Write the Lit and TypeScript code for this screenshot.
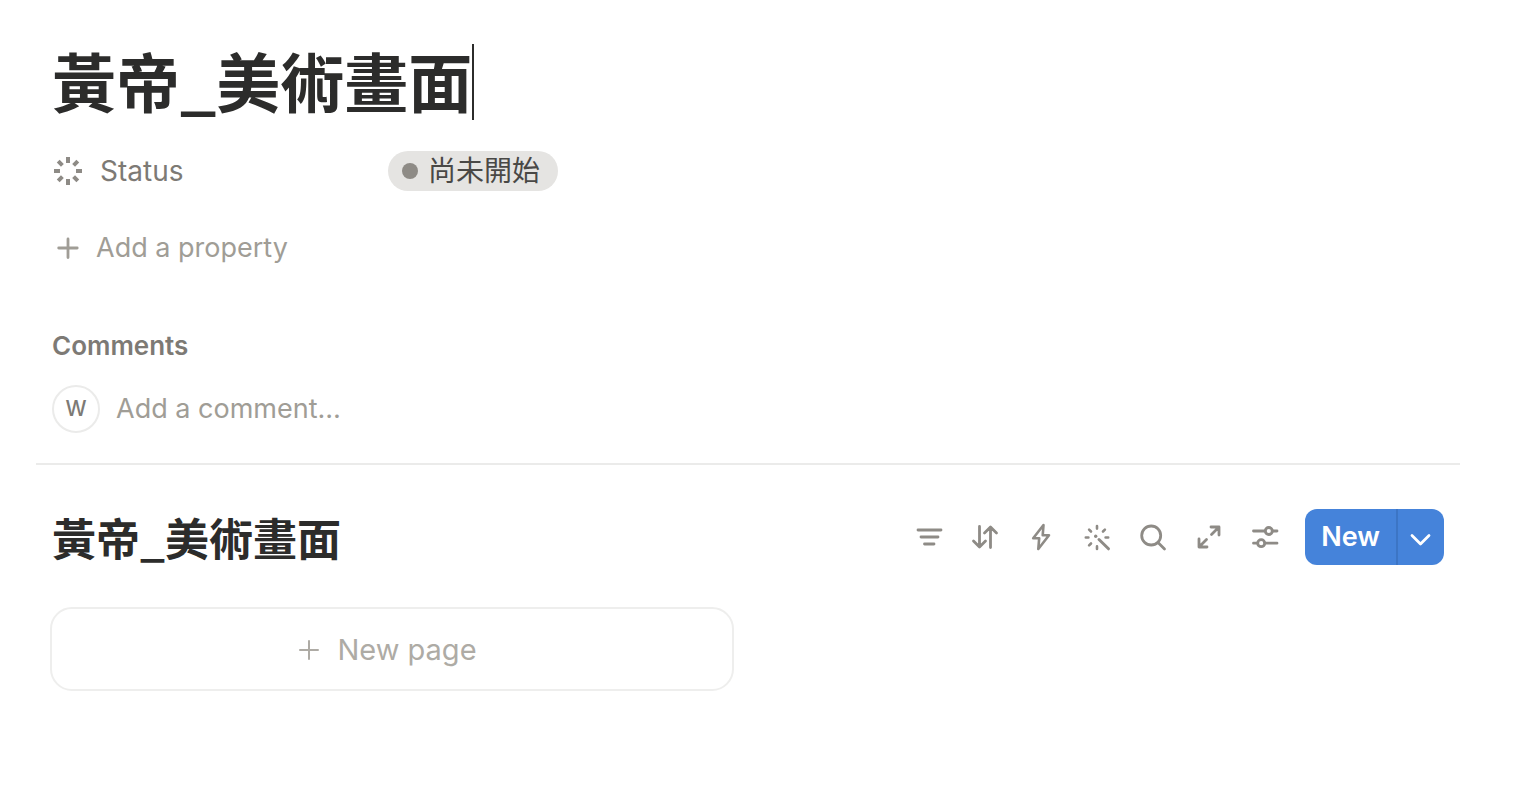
import { LitElement, html, css, svg } from "lit";
import { customElement } from "lit/decorators.js";

const icon = (size: number, body: unknown, width = 2.8) => html`<svg
  width=${size}
  height=${size}
  viewBox="0 0 ${size} ${size}"
  fill="none"
  stroke="currentColor"
  stroke-width=${width}
  stroke-linecap="round"
  stroke-linejoin="round"
  aria-hidden="true"
>${body}</svg>`;

const status = icon(
  32,
  svg`<path stroke-linecap="butt" stroke-width="4" d="M16 2v6M16 24v6M2 16h6M24 16h6M6.2 6.2l4.2 4.2M21.6 21.6l4.2 4.2M25.8 6.2l-4.2 4.2M10.4 21.6l-4.2 4.2"/>`
);
const plus = icon(32, svg`<path d="M16 7v18.500M6.700 16h18.500"/>`);
const thinPlus = icon(24, svg`<path d="M12 3v18M3 12h18"/>`, 2);
const chevron = icon(24, svg`<path d="M3 8.500l8.500 8.500 8.500-8.500"/>`, 2.8);

const tools = [
  { label: "Filter", body: svg`<path d="M5 9h23M8 16h17M11.5 23h9.5"/>` },
  {
    label: "Sort",
    body: svg`<path d="M10.5 5.5v20M4.500 20l6 6 6-6M21.5 26.500V6.500M15.500 12L21.500 6l6 6"/>`,
  },
  {
    label: "Automations",
    body: svg`<path stroke-width="2.6" d="M18.500 4L8.200 17.200h6L13.300 28 24 14.300h-6.300z"/>`,
  },
  {
    label: "Autofill",
    body: svg`<path stroke-width="2.600" d="M16 5v2.600M16 25.400V28M4.800 16.500h2.600M24.600 16.500h2.600M8.100 8.600l1.900 1.900M22 10.500l1.900-1.900M8.100 24.400l1.900-1.900"/><circle cx="14.700" cy="15.200" r="1.700" fill="currentColor" stroke="none"/><path stroke-width="3" d="M18 18.500l9.500 9.300"/>`,
  },
  { label: "Search", body: svg`<circle cx="14.200" cy="14.500" r="9.500"/><path d="M21 21.500l6.500 6.500"/>` },
  {
    label: "Expand",
    body: svg`<path d="M18.500 13.500L26 6M18 6H26v8M13.500 18.500L6 26M6 18v8h8"/>`,
  },
  {
    label: "Settings",
    body: svg`<path d="M4.500 10h11.500M23.500 10H28M4.500 22.200h4M16 22.200h12"/><circle cx="19.800" cy="10" r="3.500"/><circle cx="12.200" cy="22.200" r="3.500"/>`,
  },
];

@customElement("app-root")
export class AppRoot extends LitElement {
  static styles = css`
    :host {
      display: block;
      min-height: 100vh;
      box-sizing: border-box;
      padding: 44px 56px 48px 36px;
      background: #fff;
      color: #2c2c2b;
      font-family: Inter, "Noto Sans CJK TC", sans-serif;
      font-size: 28px;
      line-height: 40px;
    }
    * {
      box-sizing: border-box;
    }
    svg {
      display: block;
      flex: none;
    }
    button,
    input {
      font: inherit;
      color: inherit;
      background: none;
      border: 0;
      padding: 0;
      margin: 0;
    }
    button {
      cursor: pointer;
    }
    h1,
    h2,
    h3 {
      margin: 0;
    }
    .title,
    .view-title {
      font-family: "Noto Sans CJK TC", sans-serif;
      font-weight: 700;
    }
    .page-head,
    .comments {
      padding: 0 16px;
    }
    .title {
      display: flex;
      font-size: 64px;
      line-height: 70px;
    }
    .caret {
      width: 2px;
      height: 76px;
      background: #2c2c2b;
    }
    .property {
      display: flex;
      align-items: center;
      margin-top: 31px;
    }
    .property-name {
      display: flex;
      align-items: center;
      gap: 16px;
      width: 336px;
      color: #7d7a75;
    }
    .property-name svg {
      color: #8e8b86;
    }
    .pill {
      display: flex;
      align-items: center;
      gap: 10px;
      height: 40px;
      padding: 0 18px 0 14px;
      border-radius: 20px;
      background: #e5e4e2;
      color: #494846;
    }
    .dot {
      width: 16px;
      height: 16px;
      border-radius: 50%;
      background: #8e8b86;
    }
    .add-property {
      display: flex;
      align-items: center;
      gap: 12px;
      margin-top: 37px;
      font-size: 27px;
      color: #a09d96;
    }
    .comments {
      padding-top: 58px;
      padding-bottom: 30px;
      border-bottom: 2px solid #ebebea;
    }
    .comments-title {
      font-size: 26px;
      font-weight: 600;
      color: #7d7a75;
    }
    .comment {
      display: flex;
      align-items: center;
      gap: 16px;
      margin-top: 19px;
    }
    .avatar {
      width: 48px;
      height: 48px;
      border: 2px solid #ebebea;
      border-radius: 50%;
      font-size: 21px;
      font-weight: 500;
      line-height: 44px;
      text-align: center;
      color: #7d7a75;
    }
    .comment-input {
      flex: 1;
      min-width: 0;
      height: 40px;
      outline: none;
      font-size: 27px;
    }
    .comment-input::placeholder {
      color: #a09d96;
      opacity: 1;
    }
    .view-bar {
      display: flex;
      align-items: center;
      padding: 44px 16px 0;
    }
    .view-title {
      flex: 1;
      font-size: 44px;
      line-height: 56px;
    }
    .tools {
      display: flex;
      margin-right: 12px;
    }
    .tool {
      display: grid;
      place-items: center;
      width: 56px;
      height: 56px;
      color: #8e8b86;
    }
    .new {
      display: flex;
      height: 56px;
      border-radius: 12px;
      background: #4583da;
      color: #fff;
    }
    .new-main {
      padding: 0 16px;
      font-size: 27px;
      font-weight: 600;
    }
    .new-more {
      display: grid;
      place-items: center;
      width: 48px;
      padding-top: 4px;
      border-left: 2px solid #3c75c5;
    }
    .gallery {
      display: grid;
      grid-template-columns: repeat(2, 1fr);
      gap: 28px;
      padding: 42px 14px 0;
    }
    .card {
      display: flex;
      align-items: center;
      justify-content: center;
      gap: 16px;
      height: 84px;
      padding: 2px 10px 0 0;
      border: 2px solid #eeeeed;
      border-radius: 22px;
      font-size: 29px;
      color: #aeaba5;
    }
  `;

  render() {
    return html`
      <header class="page-head">
        <h1 class="title">黃帝_美術畫面<span class="caret"></span></h1>
        <div class="property">
          <div class="property-name">${status}<span>Status</span></div>
          <button class="pill"><span class="dot"></span>尚未開始</button>
        </div>
        <button class="add-property">${plus}Add a property</button>
      </header>
      <section class="comments">
        <h3 class="comments-title">Comments</h3>
        <div class="comment">
          <span class="avatar">W</span>
          <input class="comment-input" type="text" aria-label="Comment" placeholder="Add a comment…" />
        </div>
      </section>
      <section>
        <div class="view-bar">
          <h2 class="view-title">黃帝_美術畫面</h2>
          <div class="tools">
            ${tools.map(
              (t) => html`<button class="tool" aria-label=${t.label}>${icon(32, t.body)}</button>`
            )}
          </div>
          <div class="new">
            <button class="new-main">New</button>
            <button class="new-more" aria-label="More options">${chevron}</button>
          </div>
        </div>
        <div class="gallery">
          <button class="card">${thinPlus}New page</button>
        </div>
      </section>
    `;
  }
}
